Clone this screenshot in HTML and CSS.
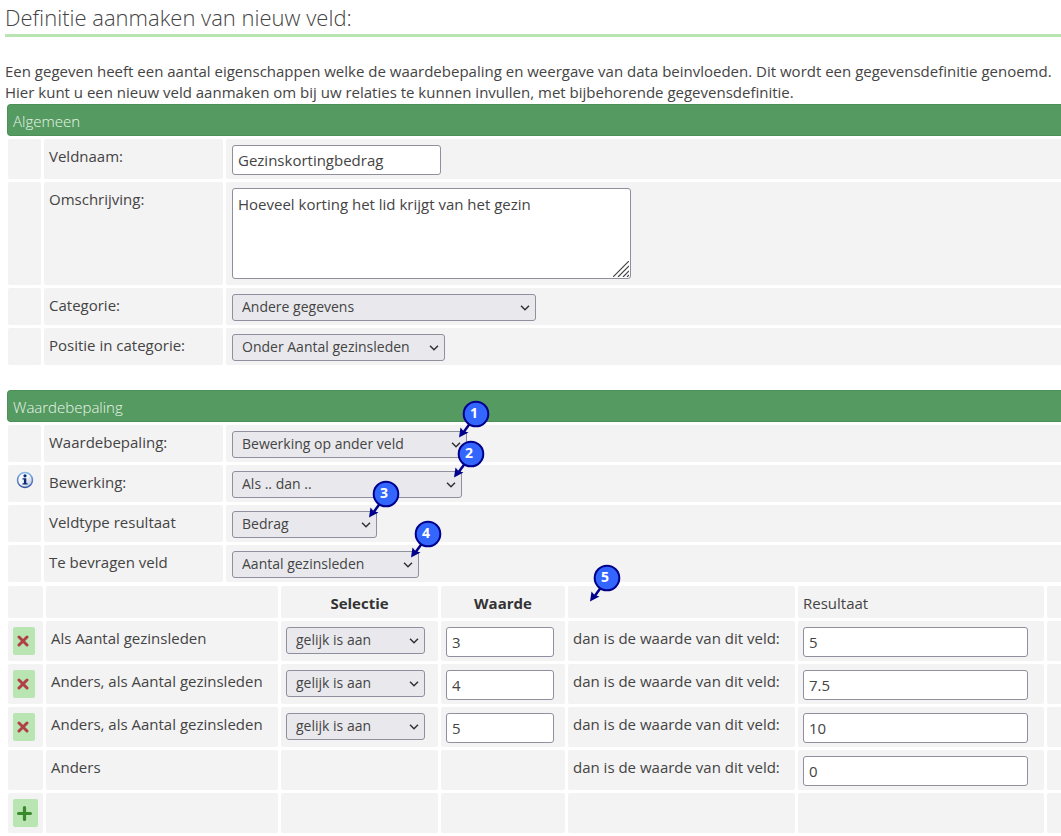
FILE: index.html
```html
<!DOCTYPE html>
<html lang="nl">
<head>
<meta charset="utf-8">
<meta name="viewport" content="width=device-width, initial-scale=1">
<title>Definitie aanmaken van nieuw veld</title>
<link rel="stylesheet" href="styles.css">
</head>
<body>
<svg class="defs" aria-hidden="true">
  <defs>
    <symbol id="pin" viewBox="0 0 32 38">
      <path d="M13 22 5 33" stroke="#00008b" stroke-width="2.500"/>
      <path d="M1 37.500 2.500 27.500 5.500 31 10.500 32.500z" fill="#00008b"/>
      <circle cx="18" cy="14" r="12.300" fill="#3366ff" stroke="#00008b" stroke-width="2"/>
    </symbol>
    <symbol id="cross" viewBox="0 0 12 12">
      <path d="M2 2 10 10M10 2 2 10" stroke="#b04045" stroke-width="3" stroke-linecap="round"/>
    </symbol>
  </defs>
</svg>
<main class="page">
  <h1 class="title">Definitie aanmaken van nieuw veld:</h1>
  <p class="intro">Een gegeven heeft een aantal eigenschappen welke de waardebepaling en weergave van data beinvloeden. Dit wordt een gegevensdefinitie genoemd.<br>Hier kunt u een nieuw veld aanmaken om bij uw relaties te kunnen invullen, met bijbehorende gegevensdefinitie.</p>

  <section class="section">
    <h2 class="bar">Algemeen</h2>
    <table class="grid form">
      <colgroup><col class="c-icon"><col class="c-label"><col></colgroup>
      <tbody>
      <tr><td></td><td><label for="naam">Veldnaam:</label></td><td><input class="text w-name" id="naam" type="text" value="Gezinskortingbedrag"></td></tr>
      <tr><td></td><td><label for="oms">Omschrijving:</label></td><td>
        <div class="field">
          <textarea class="text area" id="oms">Hoeveel korting het lid krijgt van het gezin</textarea>
          <svg class="grip" viewBox="0 0 16 16" aria-hidden="true"><path d="M0 16 16 0M5 16 16 5M10 16 16 10M14 16 16 14" stroke="#444" stroke-width="1.200"/></svg>
        </div></td></tr>
      <tr><td></td><td><label for="cat">Categorie:</label></td><td><select class="pick w-cat" id="cat"><option>Andere gegevens</option></select></td></tr>
      <tr><td></td><td><label for="pos">Positie in categorie:</label></td><td><select class="pick w-pos" id="pos"><option>Onder Aantal gezinsleden</option></select></td></tr>
      </tbody>
    </table>
  </section>

  <section class="section">
    <h2 class="bar">Waardebepaling</h2>
    <table class="grid form">
      <colgroup><col class="c-icon"><col class="c-label"><col></colgroup>
      <tbody>
      <tr><td></td><td><label for="waarde">Waardebepaling:</label></td><td>
        <div class="field"><select class="pick w-calc" id="waarde"><option>Bewerking op ander veld</option></select>
        <span class="marker"><svg aria-hidden="true"><use href="#pin"/></svg><b>1</b></span></div></td></tr>
      <tr><td class="center">
        <svg class="info" viewBox="0 0 18 18" role="img" aria-label="Informatie">
          <defs><linearGradient id="ring" x1="0" y1="0" x2="0" y2="1"><stop offset="0" stop-color="#85b6e8"/><stop offset="1" stop-color="#33549b"/></linearGradient>
          <linearGradient id="face" x1="0" y1="0" x2="1" y2="1"><stop offset="0" stop-color="#fff"/><stop offset=".5" stop-color="#f2f5f9"/><stop offset="1" stop-color="#a9bbdb"/></linearGradient></defs>
          <circle cx="9" cy="9" r="7.500" fill="url(#face)" stroke="url(#ring)" stroke-width="1.500"/>
          <circle cx="9" cy="4.800" r="1.600" fill="#0c2c78"/>
          <path d="M6.500 7.200h3.800v5h1.300v1.400H6.500v-1.400h1.400V8.600H6.500z" fill="#0c2c78"/>
        </svg></td><td><label for="bew">Bewerking:</label></td><td>
        <div class="field"><select class="pick w-op" id="bew"><option>Als .. dan ..</option></select>
        <span class="marker"><svg aria-hidden="true"><use href="#pin"/></svg><b>2</b></span></div></td></tr>
      <tr><td></td><td><label for="type">Veldtype resultaat</label></td><td>
        <div class="field"><select class="pick w-type" id="type"><option>Bedrag</option></select>
        <span class="marker"><svg aria-hidden="true"><use href="#pin"/></svg><b>3</b></span></div></td></tr>
      <tr><td></td><td><label for="veld">Te bevragen veld</label></td><td>
        <div class="field"><select class="pick w-field" id="veld"><option>Aantal gezinsleden</option></select>
        <span class="marker"><svg aria-hidden="true"><use href="#pin"/></svg><b>4</b></span></div></td></tr>
      </tbody>
    </table>
    <table class="grid rules">
      <colgroup><col class="r-icon"><col class="r-when"><col class="r-pick"><col class="r-value"><col class="r-then"><col class="r-result"><col></colgroup>
      <thead>
      <tr><td></td><td></td><th scope="col">Selectie</th><th scope="col">Waarde</th><td class="host"><span class="marker in-cell"><svg aria-hidden="true"><use href="#pin"/></svg><b>5</b></span></td><td>Resultaat</td><td></td></tr>
      </thead>
      <tbody>
      <tr><td><button class="act" type="button" aria-label="Verwijderen"><svg class="glyph"><use href="#cross"/></svg></button></td><td>Als Aantal gezinsleden</td><td><select class="pick wide" aria-label="Selectie 1"><option>gelijk is aan</option></select></td><td><input class="text w-value" type="text" value="3" aria-label="Waarde 1"></td><td>dan is de waarde van dit veld:</td><td><input class="text w-result" type="text" value="5" aria-label="Resultaat 1"></td><td></td></tr>
      <tr><td><button class="act" type="button" aria-label="Verwijderen"><svg class="glyph"><use href="#cross"/></svg></button></td><td>Anders, als Aantal gezinsleden</td><td><select class="pick wide" aria-label="Selectie 2"><option>gelijk is aan</option></select></td><td><input class="text w-value" type="text" value="4" aria-label="Waarde 2"></td><td>dan is de waarde van dit veld:</td><td><input class="text w-result" type="text" value="7.5" aria-label="Resultaat 2"></td><td></td></tr>
      <tr><td><button class="act" type="button" aria-label="Verwijderen"><svg class="glyph"><use href="#cross"/></svg></button></td><td>Anders, als Aantal gezinsleden</td><td><select class="pick wide" aria-label="Selectie 3"><option>gelijk is aan</option></select></td><td><input class="text w-value" type="text" value="5" aria-label="Waarde 3"></td><td>dan is de waarde van dit veld:</td><td><input class="text w-result" type="text" value="10" aria-label="Resultaat 3"></td><td></td></tr>
      <tr><td></td><td>Anders</td><td></td><td></td><td>dan is de waarde van dit veld:</td><td><input class="text w-result" type="text" value="0" aria-label="Resultaat anders"></td><td></td></tr>
      <tr><td><button class="act add" type="button" aria-label="Toevoegen"><svg class="glyph plus" viewBox="0 0 14 14"><path d="M7 1.500v11M1.500 7h11" stroke="#3a8a2c" stroke-width="3" stroke-linecap="round"/></svg></button></td><td></td><td></td><td></td><td></td><td></td><td></td></tr>
      </tbody>
    </table>
  </section>
</main>
</body>
</html>
```
FILE: styles.css
```css
* { box-sizing: border-box; }

body {
  margin: 0;
  background: #fff;
  color: #444;
  font-family: "Open Sans", "Noto Sans", sans-serif;
  font-size: 15px;
  line-height: 22px;
}

.defs { position: absolute; width: 0; height: 0; }
.page { padding-left: 5px; overflow: hidden; }

.title {
  margin: 0 0 24px;
  border-bottom: 3px solid #b9e5b3;
  font-size: 22px;
  font-weight: 300;
  line-height: 34px;
}

.intro { margin: 0; padding-bottom: 1px; line-height: 21px; }

.section { margin-bottom: 22px; }

.bar {
  margin: 0 0 0 2px;
  padding: 0 5px;
  height: 32px;
  border: 1px solid #4c9058;
  border-right: 0;
  border-radius: 4px 0 0 4px;
  background: #559a60;
  color: #e9f5ea;
  font-size: 15px;
  font-weight: 300;
  line-height: 32px;
}

/* Tables run past the right edge so that the last column has no end */
.grid {
  width: calc(100% + 6px);
  table-layout: fixed;
  border-collapse: separate;
  border-spacing: 3px;
}
.grid td, .grid th {
  padding: 6px 5px 4px;
  border-radius: 2px;
  background: #f3f3f3;
  text-align: left;
  vertical-align: top;
  white-space: nowrap;
}
.grid th { color: #333; font-weight: 700; text-align: center; }
.grid td.center { text-align: center; }
.form td:last-child { padding-left: 6px; }

.c-icon { width: 33px; }
.c-label { width: 179px; }

.rules { margin-top: -2px; }
.rules td, .rules th { height: 40px; }
.rules thead td, .rules thead th { height: 32px; padding-bottom: 2px; }
.r-icon { width: 35px; }
.r-when { width: 232px; }
.r-pick { width: 157px; }
.r-value { width: 124px; }
.r-then { width: 227px; }
.r-result { width: 246px; }

.text, .pick {
  display: block;
  margin: 0;
  border: 1px solid #8f8f9d;
  border-radius: 3px;
  color: #444;
  font: inherit;
}
.text { height: 30px; padding: 0 5px 1px; background: #fff; }
.area { width: 399px; height: 91px; margin-bottom: 2px; padding: 4px 5px; resize: none; }

.pick {
  height: 27px;
  padding: 0 24px 2px 9px;
  appearance: none;
  background: #e9e9ed url("data:image/svg+xml,%3Csvg xmlns='http://www.w3.org/2000/svg' width='10' height='6'%3E%3Cpath d='M1 .8 5 4.800 9 .8' fill='none' stroke='%23333' stroke-width='1.500'/%3E%3C/svg%3E") no-repeat right 5px center;
  font-size: 14px;
}

.w-name { width: 209px; }
.w-cat { width: 304px; }
.w-pos { width: 213px; }
.w-calc { width: 235px; }
.w-op { width: 230px; }
.w-type { width: 145px; }
.w-field { width: 187px; }
.wide { width: 139px; }
.w-value { width: 108px; }
.w-result { width: 225px; }

.field { position: relative; width: fit-content; }
.grip { position: absolute; right: 2px; bottom: 2px; width: 16px; height: 16px; pointer-events: none; }

.info { display: block; width: 18px; height: 18px; margin: 0 auto; }

.host { position: relative; }
.marker {
  position: absolute;
  z-index: 1;
  top: -31px;
  right: -23px;
  width: 32px;
  height: 38px;
  pointer-events: none;
}
.marker.in-cell { top: -22px; right: auto; left: 21px; }
.marker svg { display: block; width: 32px; height: 38px; }
.marker b {
  position: absolute;
  inset: 1px 4px auto 4px;
  color: #fff;
  font-size: 14px;
  line-height: 24px;
  text-align: center;
}

.act {
  display: flex;
  align-items: center;
  justify-content: center;
  width: 22px;
  height: 28px;
  margin: 0;
  padding: 0 2px 0 0;
  border: 0;
  border-radius: 2px;
  background: #b9e5b3;
}
.act.add { width: 25px; }
.glyph { width: 12px; height: 12px; }
.plus { width: 15px; height: 15px; }
```
